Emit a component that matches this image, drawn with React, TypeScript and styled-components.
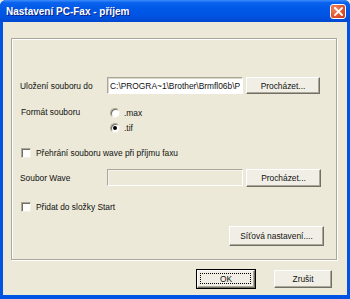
import styled, { createGlobalStyle } from 'styled-components';

const Global = createGlobalStyle`
  html, body {
    margin: 0;
    padding: 0;
    background: #ece9d8;
  }
  * {
    box-sizing: border-box;
  }
`;

const Window = styled.div`
  width: 350px;
  height: 299px;
  display: flex;
  flex-direction: column;
  background: #0054e3;
  border-radius: 6px 6px 0 0;
  overflow: hidden;
  font-family: 'Liberation Sans', Arial, sans-serif;
  font-size: 8.4px;
  color: #111;
`;

const TitleBar = styled.div`
  height: 22px;
  flex: none;
  display: flex;
  align-items: center;
  justify-content: space-between;
  padding: 0 4px 0 6px;
  background: linear-gradient(
    #3d8dfb 0%,
    #0a63ee 12%,
    #0058e6 40%,
    #0054e3 70%,
    #0048d0 100%
  );
`;

const Title = styled.span`
  color: #fff;
  font-weight: bold;
  font-size: 10px;
  text-shadow: 1px 1px 0 #0a1e82;
`;

const CloseButton = styled.div`
  width: 16px;
  height: 15px;
  margin-top: 1px;
  border: 1px solid #fff;
  border-radius: 3px;
  background: radial-gradient(circle at 30% 30%, #f08a62 0%, #e0552f 55%, #c2391b 100%);
  display: flex;
  align-items: center;
  justify-content: center;
`;

const Client = styled.div`
  flex: 1;
  margin: 0 3px 4px 3px;
  background: #ece9d8;
  display: flex;
  flex-direction: column;
`;

const Group = styled.div`
  margin: 16px 10px 0 8px;
  height: 222px;
  border: 1px solid #aca899;
  box-shadow: inset 1px 1px 0 #fff, 1px 1px 0 #fff;
  padding: 38px 0 0 8px;
  display: flex;
  flex-direction: column;
`;

const FieldRow = styled.div<{ $top?: number }>`
  display: flex;
  align-items: center;
  height: 17px;
  margin-top: ${(p) => p.$top ?? 0}px;
`;

const Label = styled.span`
  width: 87px;
  flex: none;
  white-space: nowrap;
`;

const TextField = styled.div<{ $disabled?: boolean }>`
  width: 136px;
  height: 17px;
  flex: none;
  margin-right: 3px;
  padding: 0 2px;
  display: flex;
  align-items: center;
  overflow: hidden;
  white-space: nowrap;
  background: ${(p) => (p.$disabled ? '#ece9d8' : '#fff')};
  border-top: 1px solid #aca899;
  border-left: 1px solid #aca899;
  border-bottom: 1px solid #fff;
  border-right: 1px solid #fff;
  box-shadow: ${(p) => (p.$disabled ? 'inset 1px 1px 0 #f4f3ee' : 'inset 1px 1px 0 #d9d6c8')};
`;

const Button = styled.div<{ $w: number; $h?: number; $default?: boolean }>`
  width: ${(p) => p.$w}px;
  height: ${(p) => p.$h ?? 17}px;
  flex: none;
  display: flex;
  align-items: center;
  justify-content: center;
  background: #f1efe5;
  border-top: 1px solid #fff;
  border-left: 1px solid #fff;
  border-right: 1px solid #716f64;
  border-bottom: 1px solid #716f64;
  box-shadow: inset -1px -1px 0 #aca899;
  outline: ${(p) => (p.$default ? '1px solid #000' : 'none')};
  position: relative;
  white-space: nowrap;
`;

const FocusRing = styled.span`
  position: absolute;
  inset: 2px 3px 3px 2px;
  border: 1px dotted #000;
`;

const FormatRow = styled.div`
  display: flex;
  margin-top: 11px;
`;

const FormatLabel = styled.span`
  width: 90px;
  padding-left: 1px;
  line-height: 15px;
  flex: none;
`;

const RadioList = styled.div`
  display: flex;
  flex-direction: column;
`;

const Option = styled.div`
  height: 15px;
  display: flex;
  align-items: center;
  gap: 4px;
`;

const Radio = styled.span<{ $checked?: boolean }>`
  width: 10px;
  height: 10px;
  border-radius: 50%;
  background: #fff;
  border: 1px solid;
  border-color: #aca899 #f1efe2 #f1efe2 #aca899;
  box-shadow: inset 1px 1px 0 #716f64;
  display: flex;
  align-items: center;
  justify-content: center;
  &::after {
    content: '';
    width: 4px;
    height: 4px;
    border-radius: 50%;
    background: ${(p) => (p.$checked ? '#000' : 'transparent')};
  }
`;

const CheckRow = styled.div<{ $top: number }>`
  height: 14px;
  margin-top: ${(p) => p.$top}px;
  padding-left: 1px;
  display: flex;
  align-items: center;
  gap: 5px;
`;

const Checkbox = styled.span`
  width: 10px;
  height: 10px;
  background: #fff;
  border: 1px solid;
  border-color: #aca899 #f1efe2 #f1efe2 #aca899;
  box-shadow: inset 1px 1px 0 #716f64;
`;

const NetworkRow = styled.div`
  display: flex;
  justify-content: flex-end;
  margin: 12px 12px 0 0;
`;

const Footer = styled.div`
  display: flex;
  justify-content: flex-end;
  gap: 19px;
  margin: 10px 15px 0 0;
`;

export default function App() {
  return (
    <>
      <Global />
      <Window>
        <TitleBar>
          <Title>Nastavení PC-Fax - příjem</Title>
          <CloseButton>
            <svg width="9" height="9" viewBox="0 0 9 9">
              <path d="M1 1 L8 8 M8 1 L1 8" stroke="#fff" strokeWidth="1.8" strokeLinecap="square" />
            </svg>
          </CloseButton>
        </TitleBar>
        <Client>
          <Group>
            <FieldRow>
              <Label>Uložení souboru do</Label>
              <TextField>C:\PROGRA~1\Brother\Brmfl06b\P</TextField>
              <Button $w={74}>Procházet...</Button>
            </FieldRow>
            <FormatRow>
              <FormatLabel>Formát souboru</FormatLabel>
              <RadioList>
                <Option>
                  <Radio />
                  <span>.max</span>
                </Option>
                <Option>
                  <Radio $checked />
                  <span>.tif</span>
                </Option>
              </RadioList>
            </FormatRow>
            <CheckRow $top={11}>
              <Checkbox />
              <span>Přehrání souboru wave při příjmu faxu</span>
            </CheckRow>
            <FieldRow $top={9}>
              <Label>Soubor Wave</Label>
              <TextField $disabled />
              <Button $w={75} $h={18}>Procházet...</Button>
            </FieldRow>
            <CheckRow $top={14}>
              <Checkbox />
              <span>Přidat do složky Start</span>
            </CheckRow>
            <NetworkRow>
              <Button $w={95} $h={20}>Síťová nastavení....</Button>
            </NetworkRow>
          </Group>
          <Footer>
            <Button $w={58} $h={18} $default>
              <FocusRing />
              OK
            </Button>
            <Button $w={58} $h={18}>Zrušit</Button>
          </Footer>
        </Client>
      </Window>
    </>
  );
}
